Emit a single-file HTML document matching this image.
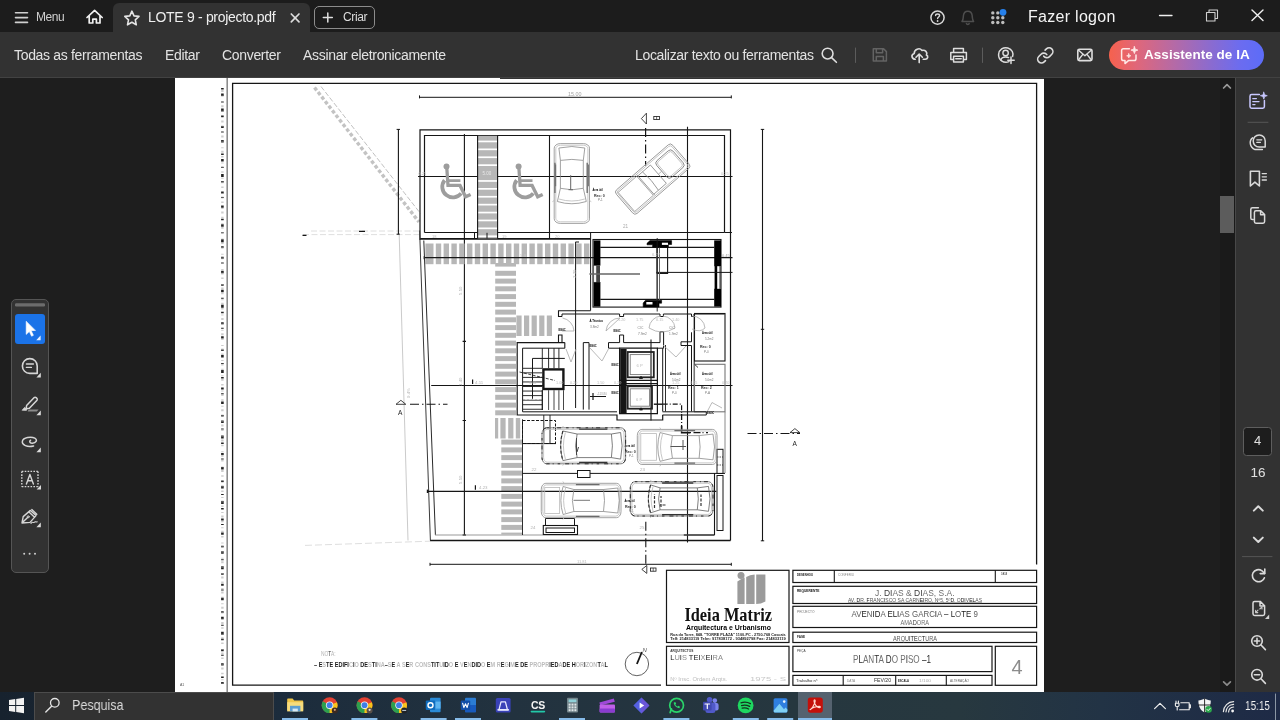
<!DOCTYPE html>
<html>
<head>
<meta charset="utf-8">
<title>LOTE 9 - projecto.pdf</title>
<style>
*{margin:0;padding:0;box-sizing:border-box}
html,body{width:1280px;height:720px;overflow:hidden;background:#1e1e1e;font-family:"Liberation Sans",sans-serif;color:#e6e6e6}
.abs{position:absolute}
#titlebar{position:absolute;left:0;top:0;width:1280px;height:32px;background:#1c1c1c}
#tab{position:absolute;left:113px;top:3px;width:197px;height:30px;background:#323232;border-radius:6px 6px 0 0}
#toolbar{position:absolute;left:0;top:32px;width:1280px;height:46px;background:#323232;border-bottom:1px solid #424242}
#tbx{position:absolute;left:500px;top:78px;width:544px;height:1px;background:#343434}
.t{position:absolute;white-space:nowrap;line-height:1;will-change:transform}
#page{position:absolute;left:175px;top:77px;width:869px;height:615px;background:#fff}
#rpane{position:absolute;left:1235px;top:78px;width:45px;height:614px;background:#323232;border-left:1px solid #484848}
#scroll{position:absolute;left:1220px;top:78px;width:16px;height:614px;background:#1a1a1a}
#thumb{position:absolute;left:1220px;top:196px;width:14px;height:37px;background:#5c5c5c}
#lpal{position:absolute;left:11px;top:299px;width:38px;height:274px;background:#323232;border:1px solid #555;border-radius:5px}
#taskbar{position:absolute;left:0;top:692px;width:1280px;height:28px;background:linear-gradient(90deg,#17222e 0%,#1c2c3c 22%,#22323f 40%,#26373f 62%,#27383f 75%,#223345 86%,#1e2a46 100%)}
#search{position:absolute;left:34px;top:692px;width:240px;height:28px;background:#323232;border:1px solid #4c4c4c;border-bottom:none}
svg{position:absolute;overflow:visible;will-change:transform}
</style>
</head>
<body>
<div id="page"></div>
<div id="titlebar"></div>
<div id="tab"></div>
<div id="toolbar"></div><div id="tbx"></div>

<svg style="left:0;top:0" width="1280" height="32" viewBox="0 0 1280 32" fill="none" stroke="#d4d4d4" stroke-width="1.5" stroke-linecap="round" stroke-linejoin="round">
 <!-- hamburger -->
 <path d="M15.5 12.8H27.5M15.5 17.6H27.5M15.5 22.4H27.5" stroke="#cfcfcf" stroke-width="1.6"/>
 <!-- home -->
 <path d="M87 17.5L94.6 10.3L102.2 17.5M89.2 16V23H92.8V19.2H96.4V23H100V16" stroke="#f0f0f0" stroke-width="1.7"/>
 <!-- star -->
 <path d="M131.9 11.2L134 15.9L139 16.4L135.3 19.8L136.3 24.8L131.9 22.3L127.5 24.8L128.5 19.8L124.8 16.4L129.8 15.9Z" stroke="#e4e4e4" stroke-width="1.6"/>
 <!-- tab close -->
 <path d="M291.3 14L299 21.8M299 14L291.3 21.8" stroke="#dcdcdc" stroke-width="1.7"/>
 <!-- criar button -->
 <rect x="314.5" y="6.5" width="60" height="22" rx="4.5" stroke="#8c8c8c" stroke-width="1"/>
 <path d="M323.3 17.6H332.3M327.8 13.1V22.1" stroke="#e0e0e0" stroke-width="1.5"/>
 <!-- help -->
 <circle cx="937.5" cy="17.6" r="6.6" stroke="#d8d8d8" stroke-width="1.5"/>
 <path d="M935.6 15.6C935.6 13.4 939.6 13.4 939.6 15.6C939.6 17 937.6 17 937.6 18.6" stroke="#d8d8d8" stroke-width="1.4"/>
 <circle cx="937.6" cy="21" r="0.9" fill="#d8d8d8" stroke="none"/>
 <!-- bell -->
 <path d="M962 21.5C963.4 20 963.2 18 963.4 15.8C963.7 12.6 965.6 11.2 967.8 11.2C970 11.2 971.9 12.6 972.2 15.8C972.4 18 972.2 20 973.6 21.5ZM966.4 23.6C966.8 24.8 968.8 24.8 969.2 23.6" stroke="#4e4e4e" stroke-width="1.5"/>
 <!-- apps grid -->
 <g fill="#bdbdbd" stroke="none">
  <circle cx="992.8" cy="12.9" r="1.7"/><circle cx="997.8" cy="12.9" r="1.7"/>
  <circle cx="992.8" cy="17.7" r="1.7"/><circle cx="997.8" cy="17.7" r="1.7"/><circle cx="1002.8" cy="17.7" r="1.7"/>
  <circle cx="992.8" cy="22.5" r="1.7"/><circle cx="997.8" cy="22.5" r="1.7"/><circle cx="1002.8" cy="22.5" r="1.7"/>
 </g>
 <circle cx="1003" cy="12.3" r="3.4" fill="#2680eb" stroke="none"/>
 <!-- window controls -->
 <path d="M1159.5 15.5H1172" stroke="#f0f0f0" stroke-width="1.3"/>
 <path d="M1206.5 12.5H1215V21H1206.5ZM1209 12.3V10H1217.5V18.5H1215.3" stroke="#d0d0d0" stroke-width="1.1"/>
 <path d="M1252 10L1263 20.5M1263 10L1252 20.5" stroke="#f0f0f0" stroke-width="1.4"/>
</svg>
<div class="t" id="tmenu" style="left:35.5px;top:11px;font-size:12px;color:#cfcfcf;letter-spacing:-0.45px">Menu</div>
<div class="t" id="ttab" style="left:147.5px;top:10px;font-size:14px;color:#efefef;letter-spacing:-0.31px">LOTE 9 - projecto.pdf</div>
<div class="t" id="tcriar" style="left:342.5px;top:11px;font-size:12px;color:#dcdcdc;letter-spacing:-0.35px">Criar</div>
<div class="t" id="tlogon" style="left:1028px;top:9px;font-size:16px;color:#f4f4f4;letter-spacing:0.29px">Fazer logon</div>


<div class="t" id="tb1" style="letter-spacing:-0.32px;left:14px;top:48px;font-size:14px;color:#e2e2e2">Todas as ferramentas</div>
<div class="t" id="tb2" style="letter-spacing:-0.32px;left:165px;top:48px;font-size:14px;color:#e2e2e2">Editar</div>
<div class="t" id="tb3" style="letter-spacing:-0.32px;left:222px;top:48px;font-size:14px;color:#e2e2e2">Converter</div>
<div class="t" id="tb4" style="letter-spacing:-0.32px;left:303px;top:48px;font-size:14px;color:#e2e2e2">Assinar eletronicamente</div>
<div class="t" id="tb5" style="letter-spacing:-0.32px;left:635px;top:48px;font-size:14px;color:#e2e2e2">Localizar texto ou ferramentas</div>
<div id="aibtn" style="position:absolute;left:1109px;top:40px;width:155px;height:30px;border-radius:15px;background:linear-gradient(90deg,#f6614d 0%,#e0677a 18%,#b56aa6 42%,#8a6bd0 66%,#6b6cf0 85%,#5c6cf8 100%)"></div>
<div class="t" id="tbai" style="left:1144.2px;top:48.2px;font-size:13.5px;letter-spacing:0.05px;font-weight:bold;color:#fff">Assistente de IA</div>
<svg style="left:0;top:32px" width="1280" height="45" viewBox="0 32 1280 45" fill="none" stroke="#dedede" stroke-width="1.6" stroke-linecap="round" stroke-linejoin="round">
 <!-- search -->
 <circle cx="827.6" cy="53.6" r="5.4"/><path d="M831.6 57.6L836.4 62.3"/>
 <path d="M855.5 48V62.5M982.5 48V62.5" stroke="#5c5c5c" stroke-width="1"/>
 <!-- save (dim) -->
 <path d="M873.3 48.8H883.6L886.4 51.6V61H873.3ZM876.3 48.8V52.8H882.6V48.8M876.3 61V56.4H883.4V61" stroke="#636363" stroke-width="1.5"/>
 <!-- cloud upload -->
 <path d="M915.3 59.2C911.6 59.2 910.6 54.6 914.2 53.4C914.2 49.4 919.4 47.2 922 50.4C925.2 49.6 927.8 52.2 926.4 55C928.6 56 928 59.2 925.2 59.2H923.2"/>
 <path d="M919.2 62.6V54.4M916 57.2L919.2 54L922.4 57.2"/>
 <!-- print -->
 <path d="M953.6 52.2V48.4H963.4V52.2M953.4 59.6H950.8V52.4H966.4V59.6H963.6M953.6 56.2H963.4V62H953.6ZM955.8 58.8H961.2" stroke-width="1.5"/>
 <!-- user plus -->
 <path d="M1009 61.6C1003.6 63.6 998.2 59.8 998.6 54.4C999 49.6 1003.4 46.8 1007.8 48C1012.2 49.2 1013.8 53.4 1012.6 56.4" stroke-width="1.5"/>
 <circle cx="1005.6" cy="53" r="2.7" stroke-width="1.4"/>
 <path d="M1000.8 60C1001.4 57.6 1003.4 57 1005.6 57C1007 57 1008 57.2 1008.6 57.6" stroke-width="1.4"/>
 <path d="M1011 57V63.4M1007.8 60.2H1014.2" stroke-width="1.5"/>
 <!-- link -->
 <g transform="translate(1036.1 46.2) scale(0.765)" stroke-width="2.1"><path d="M10 13a5 5 0 0 0 7.54.54l3-3a5 5 0 0 0-7.07-7.07l-1.72 1.71"/><path d="M14 11a5 5 0 0 0-7.54-.54l-3 3a5 5 0 0 0 7.07 7.07l1.71-1.71"/></g>
 <!-- mail -->
 <rect x="1077.8" y="49.2" width="14.2" height="11.4" rx="1.6" stroke-width="1.6"/><path d="M1078.6 50.2L1084.9 55.8L1091.2 50.2M1078.6 59.8L1082.8 54.4M1091.2 59.8L1087 54.4" stroke-width="1.4"/>
 <!-- AI icon -->
 <g stroke="#ffe9e6" stroke-width="1.5">
  <path d="M1129.4 48.8H1123.4C1122.2 48.8 1121.6 49.6 1121.6 50.6V58.8C1121.6 59.8 1122.2 60.6 1123.4 60.6H1125V63.6L1128.4 60.6H1134.2C1135.4 60.6 1136 59.8 1136 58.8V55"/>
  <path d="M1134.4 46.6L1135.3 49.2L1137.9 50.1L1135.3 51L1134.4 53.6L1133.5 51L1130.9 50.1L1133.5 49.2Z" fill="#ffe9e6" stroke-width="0.8"/>
  <path d="M1128.8 53.6L1129.4 55.2L1131 55.8L1129.4 56.4L1128.8 58L1128.2 56.4L1126.6 55.8L1128.2 55.2Z" fill="#ffe9e6" stroke-width="0.6"/>
 </g>
</svg>

<!--DRAWING--><svg style="left:0;top:0" width="1280" height="720" viewBox="0 0 1280 720" fill="none" font-family="Liberation Sans, sans-serif" shape-rendering="auto"><defs><clipPath id="pgclip"><rect x="175" y="77.5" width="869" height="614.5"/></clipPath></defs><g clip-path="url(#pgclip)">
<path d="M227.2 78L227.2 692" stroke="#8c8c8c" stroke-width="1.6" />
<path d="M222.4 88V684" stroke="#161616" stroke-width="2.6" fill="none" stroke-dasharray="1.5 4 2.5 5.5 1 6 3 4 1.5 9 2 3.6 1 7.4 2.4 11" opacity="0.95"/>
<path d="M222.4 90V684" stroke="#9a9a9a" stroke-width="2.4" fill="none" stroke-dasharray="2 3.2 1.5 5 1 2.5" opacity="0.5"/>
<text x="180" y="686" font-size="3.5" fill="#555" stroke="none" >A1</text>
<path d="M1036.6 564.5V83.4H232.6V685.2H661" stroke="#161616" stroke-width="1.3" fill="none" />
<path d="M419.5 97.3L731.3 97.3" stroke="#161616" stroke-width="1" />
<path d="M419.5 95.4V98.4M731.3 95.4V98.4" stroke="#161616" stroke-width="1" fill="none" />
<text x="568" y="96" font-size="5.4" fill="#a4a4a4" stroke="none" >15.00</text>
<path d="M314.5 87.5L419 222" stroke="#c3c3c3" stroke-width="3.4" fill="none" stroke-dasharray="3.6 2.2"/>
<path d="M321 86.5L420.5 213.5" stroke="#b0b0b0" stroke-width="0.8" fill="none" stroke-dasharray="5 2"/>
<path d="M303 234.6H420M311 231H420" stroke="#d6d6d6" stroke-width="0.8" fill="none" stroke-dasharray="6 2.5"/>
<path d="M302.5 235.4L306.5 235.4" stroke="#161616" stroke-width="1.2" />
<path d="M359 231.4L365 231.4" stroke="#161616" stroke-width="1.2" />
<path d="M398.4 129.2L398.4 234.4" stroke="#161616" stroke-width="1.1" />
<path d="M396.6 129.4H400M396.6 234.2H400" stroke="#161616" stroke-width="1" fill="none" />
<path d="M399.2 234.5L408 540.5" stroke="#bdbdbd" stroke-width="0.8" fill="none" />
<path d="M305 545.4L430 541.2" stroke="#d6d6d6" stroke-width="0.8" fill="none" stroke-dasharray="7 3"/>
<path d="M420 240V129.8H730.5V540.5" stroke="#161616" stroke-width="1.2" fill="none" />
<path d="M430 540.5L730.5 540.5" stroke="#161616" stroke-width="1.3" />
<path d="M424.5 232.5V135.5H724.5V232.5" stroke="#161616" stroke-width="1.2" fill="none" />
<path d="M424.5 232.5L724.5 232.5" stroke="#161616" stroke-width="1" />
<path d="M420 238.8L590.5 238.8" stroke="#161616" stroke-width="1.8" />
<path d="M724.5 232.5L732 232.5" stroke="#161616" stroke-width="1" />
<path d="M464.4 134L464.4 535" stroke="#161616" stroke-width="1.1" />
<path d="M549.5 135.5L549.5 238.5" stroke="#161616" stroke-width="1.1" />
<path d="M687.5 126.8L687.5 542.5" stroke="#161616" stroke-width="1.1" />
<path d="M418 176.5L732.5 176.5" stroke="#161616" stroke-width="1.1" />
<rect x="477.6" y="135.8" width="19.8" height="102.6" stroke="none" stroke-width="0" fill="#b7b7b7" />
<rect x="477.6" y="140.6" width="19.8" height="1.7" fill="#fff" stroke="none"/>
<rect x="477.6" y="148.5" width="19.8" height="1.7" fill="#fff" stroke="none"/>
<rect x="477.6" y="156.4" width="19.8" height="1.7" fill="#fff" stroke="none"/>
<rect x="477.6" y="164.3" width="19.8" height="1.7" fill="#fff" stroke="none"/>
<rect x="477.6" y="180.1" width="19.8" height="1.7" fill="#fff" stroke="none"/>
<rect x="477.6" y="188" width="19.8" height="1.7" fill="#fff" stroke="none"/>
<rect x="477.6" y="195.9" width="19.8" height="1.7" fill="#fff" stroke="none"/>
<rect x="477.6" y="203.8" width="19.8" height="1.7" fill="#fff" stroke="none"/>
<rect x="477.6" y="211.7" width="19.8" height="1.7" fill="#fff" stroke="none"/>
<rect x="477.6" y="219.6" width="19.8" height="1.7" fill="#fff" stroke="none"/>
<rect x="477.6" y="227.5" width="19.8" height="1.7" fill="#fff" stroke="none"/>
<rect x="477.6" y="235.4" width="19.8" height="1.7" fill="#fff" stroke="none"/>
<path d="M477.6 135.5L477.6 238.5" stroke="#161616" stroke-width="1.1" />
<path d="M497.6 135.5L497.6 238.5" stroke="#161616" stroke-width="1.1" />
<path d="M474.5 232.8V238.5M487 232.8V238.5" stroke="#161616" stroke-width="1" fill="none" />
<text x="482.5" y="175" font-size="4.5" fill="#e8e8e8" stroke="none" >5.00</text>
<g transform="translate(0 0)" stroke="#9d9d9d" fill="none" stroke-linecap="butt">
<circle cx="446.5" cy="166.6" r="3" fill="#9d9d9d" stroke="none"/>
<path d="M446.8 168L448 185.4H460L465.6 196.8L470.6 194.4" stroke-width="3.3"/>
<path d="M448 180.6H460.4" stroke-width="2.6"/>
<path d="M444.6 180.2A10.4 10.4 0 1 0 461.2 193.4" stroke-width="3.8"/>
</g>
<g transform="translate(72.1 0)" stroke="#9d9d9d" fill="none" stroke-linecap="butt">
<circle cx="446.5" cy="166.6" r="3" fill="#9d9d9d" stroke="none"/>
<path d="M446.8 168L448 185.4H460L465.6 196.8L470.6 194.4" stroke-width="3.3"/>
<path d="M448 180.6H460.4" stroke-width="2.6"/>
<path d="M444.6 180.2A10.4 10.4 0 1 0 461.2 193.4" stroke-width="3.8"/>
</g>
<text x="432" y="237.5" font-size="4" fill="#bbb" stroke="none" >18</text>
<text x="502" y="237.5" font-size="4" fill="#bbb" stroke="none" >19</text>
<text x="555" y="237.5" font-size="4" fill="#bbb" stroke="none" >20</text>
<text x="418.5" y="175" font-size="4" fill="#bbb" stroke="none" >0.25</text>
<text x="721" y="175" font-size="4" fill="#bbb" stroke="none" >0.25</text>
<text x="623" y="228" font-size="4.6" fill="#aaa" stroke="none" >21</text>
<rect x="425.4" y="243.5" width="8.1" height="20.7" fill="#b7b7b7" stroke="none"/>
<rect x="435.8" y="243.5" width="5.4" height="20.7" fill="#b7b7b7" stroke="none"/>
<rect x="443.6" y="243.5" width="5.4" height="20.7" fill="#b7b7b7" stroke="none"/>
<rect x="451.4" y="243.5" width="5.4" height="20.7" fill="#b7b7b7" stroke="none"/>
<rect x="459.2" y="243.5" width="5.4" height="20.7" fill="#b7b7b7" stroke="none"/>
<rect x="467" y="243.5" width="5.4" height="20.7" fill="#b7b7b7" stroke="none"/>
<rect x="474.8" y="243.5" width="5.4" height="20.7" fill="#b7b7b7" stroke="none"/>
<rect x="482.6" y="243.5" width="5.4" height="20.7" fill="#b7b7b7" stroke="none"/>
<rect x="490.4" y="243.5" width="5.4" height="20.7" fill="#b7b7b7" stroke="none"/>
<rect x="498.2" y="243.5" width="5.4" height="20.7" fill="#b7b7b7" stroke="none"/>
<rect x="506" y="243.5" width="5.4" height="20.7" fill="#b7b7b7" stroke="none"/>
<rect x="513.8" y="243.5" width="5.4" height="20.7" fill="#b7b7b7" stroke="none"/>
<rect x="521.6" y="243.5" width="5.4" height="20.7" fill="#b7b7b7" stroke="none"/>
<rect x="529.4" y="243.5" width="5.4" height="20.7" fill="#b7b7b7" stroke="none"/>
<rect x="537.2" y="243.5" width="5.4" height="20.7" fill="#b7b7b7" stroke="none"/>
<rect x="545" y="243.5" width="5.4" height="20.7" fill="#b7b7b7" stroke="none"/>
<rect x="552.8" y="243.5" width="5.4" height="20.7" fill="#b7b7b7" stroke="none"/>
<rect x="560.6" y="243.5" width="5.4" height="20.7" fill="#b7b7b7" stroke="none"/>
<rect x="568.4" y="243.5" width="5.4" height="20.7" fill="#b7b7b7" stroke="none"/>
<rect x="576.2" y="243.5" width="5.4" height="20.7" fill="#b7b7b7" stroke="none"/>
<rect x="584" y="243.5" width="5.4" height="20.7" fill="#b7b7b7" stroke="none"/>
<path d="M424 257.6L732.5 257.6" stroke="#161616" stroke-width="1.1" />
<path d="M424.2 256.2V259.2" stroke="#161616" stroke-width="1.2" fill="none" />
<rect x="495.2" y="263" width="20.8" height="3.6" fill="#b7b7b7" stroke="none"/>
<rect x="495.2" y="270.8" width="20.8" height="5" fill="#b7b7b7" stroke="none"/>
<rect x="495.2" y="278.6" width="20.8" height="5" fill="#b7b7b7" stroke="none"/>
<rect x="495.2" y="286.3" width="20.8" height="5" fill="#b7b7b7" stroke="none"/>
<rect x="495.2" y="294.1" width="20.8" height="5" fill="#b7b7b7" stroke="none"/>
<rect x="495.2" y="301.8" width="20.8" height="5" fill="#b7b7b7" stroke="none"/>
<rect x="495.2" y="309.6" width="20.8" height="5" fill="#b7b7b7" stroke="none"/>
<rect x="495.2" y="317.3" width="20.8" height="5" fill="#b7b7b7" stroke="none"/>
<rect x="495.2" y="325.1" width="20.8" height="5" fill="#b7b7b7" stroke="none"/>
<rect x="495.2" y="332.8" width="20.8" height="5" fill="#b7b7b7" stroke="none"/>
<rect x="495.2" y="340.6" width="20.8" height="5" fill="#b7b7b7" stroke="none"/>
<rect x="495.2" y="348.3" width="20.8" height="5" fill="#b7b7b7" stroke="none"/>
<rect x="495.2" y="356.1" width="20.8" height="5" fill="#b7b7b7" stroke="none"/>
<rect x="495.2" y="363.8" width="20.8" height="5" fill="#b7b7b7" stroke="none"/>
<rect x="495.2" y="371.6" width="20.8" height="5" fill="#b7b7b7" stroke="none"/>
<rect x="495.2" y="379.3" width="20.8" height="5" fill="#b7b7b7" stroke="none"/>
<rect x="495.2" y="387.1" width="20.8" height="5" fill="#b7b7b7" stroke="none"/>
<rect x="495.2" y="394.8" width="20.8" height="5" fill="#b7b7b7" stroke="none"/>
<rect x="495.2" y="402.6" width="20.8" height="5" fill="#b7b7b7" stroke="none"/>
<rect x="495.2" y="410.3" width="20.8" height="5" fill="#b7b7b7" stroke="none"/>
<rect x="516.4" y="315.5" width="5.2" height="20.5" fill="#b7b7b7" stroke="none"/>
<rect x="524" y="315.5" width="5.2" height="20.5" fill="#b7b7b7" stroke="none"/>
<rect x="531.6" y="315.5" width="5.2" height="20.5" fill="#b7b7b7" stroke="none"/>
<rect x="539.2" y="315.5" width="5.2" height="20.5" fill="#b7b7b7" stroke="none"/>
<rect x="546.8" y="315.5" width="5.2" height="20.5" fill="#b7b7b7" stroke="none"/>
<rect x="495" y="418" width="3.2" height="20.5" fill="#b7b7b7" stroke="none"/>
<rect x="500.4" y="418" width="5.2" height="20.5" fill="#b7b7b7" stroke="none"/>
<rect x="508.2" y="418" width="5.2" height="20.5" fill="#b7b7b7" stroke="none"/>
<rect x="515.8" y="418" width="4.4" height="20.5" fill="#b7b7b7" stroke="none"/>
<rect x="501.3" y="439.6" width="20.8" height="5" fill="#b7b7b7" stroke="none"/>
<rect x="501.3" y="447.4" width="20.8" height="5" fill="#b7b7b7" stroke="none"/>
<rect x="501.3" y="455.1" width="20.8" height="5" fill="#b7b7b7" stroke="none"/>
<rect x="501.3" y="462.9" width="20.8" height="5" fill="#b7b7b7" stroke="none"/>
<rect x="501.3" y="470.6" width="20.8" height="5" fill="#b7b7b7" stroke="none"/>
<rect x="501.3" y="478.4" width="20.8" height="5" fill="#b7b7b7" stroke="none"/>
<rect x="501.3" y="486.1" width="20.8" height="5" fill="#b7b7b7" stroke="none"/>
<rect x="501.3" y="493.9" width="20.8" height="5" fill="#b7b7b7" stroke="none"/>
<rect x="501.3" y="501.6" width="20.8" height="5" fill="#b7b7b7" stroke="none"/>
<rect x="501.3" y="509.4" width="20.8" height="5" fill="#b7b7b7" stroke="none"/>
<rect x="501.3" y="517.1" width="20.8" height="5" fill="#b7b7b7" stroke="none"/>
<rect x="501.3" y="524.9" width="20.8" height="5" fill="#b7b7b7" stroke="none"/>
<rect x="501.3" y="532.6" width="20.8" height="1.8" fill="#b7b7b7" stroke="none"/>
<path d="M419.6 230.5L430.4 540.5" stroke="#3a3a3a" stroke-width="1" fill="none" />
<path d="M423.8 240.5L435.4 535" stroke="#2a2a2a" stroke-width="1" fill="none" />
<path d="M431.2 385.5L732.5 385.5" stroke="#161616" stroke-width="1.1" />
<path d="M427.5 491.4L716.3 491.4" stroke="#161616" stroke-width="1.1" />
<path d="M427.6 489.6V493" stroke="#161616" stroke-width="1.6" fill="none" />
<path d="M435 535L714.5 535" stroke="#9a9a9a" stroke-width="1.2" />
<path d="M683.8 535L714.5 535" stroke="#161616" stroke-width="1.2" />
<path d="M714.5 473L714.5 535" stroke="#161616" stroke-width="1.1" />
<path d="M462.6 341.3H466M462.6 420.5H466M462.6 535H466" stroke="#161616" stroke-width="1.2" fill="none" />
<path d="M575.6 241.8L575.6 408" stroke="#161616" stroke-width="1" />
<path d="M575.8 242H579" stroke="#161616" stroke-width="1" fill="none" />
<path d="M762.5 129.2L762.5 541" stroke="#161616" stroke-width="1.1" />
<path d="M760.8 129.4H764.2M760.8 540.8H764.2M760.8 329.3H764.2" stroke="#161616" stroke-width="1" fill="none" />
<path d="M430 564.3L731.3 564.3" stroke="#161616" stroke-width="1" />
<path d="M430 562.8V565.8M731.3 562.8V565.8" stroke="#161616" stroke-width="1" fill="none" />
<text x="577" y="562.6" font-size="4" fill="#bbb" stroke="none" >11.81</text>
<text x="462" y="295" font-size="4.4" fill="#b4b4b4" stroke="none" transform="rotate(-90 462 295)">5.50</text>
<text x="462" y="386" font-size="4.4" fill="#b4b4b4" stroke="none" transform="rotate(-90 462 386)">1.40</text>
<text x="462" y="484" font-size="4.4" fill="#b4b4b4" stroke="none" transform="rotate(-90 462 484)">5.50</text>
<text x="576" y="278" font-size="4.4" fill="#b4b4b4" stroke="none" transform="rotate(-90 576 278)">3.30</text>
<text x="409.5" y="398" font-size="4.4" fill="#b4b4b4" stroke="none" transform="rotate(-90 409.5 398)">9.4%</text>
<text x="475" y="383.5" font-size="4.4" fill="#b4b4b4" stroke="none" >4.11</text>
<text x="479" y="489.4" font-size="4.4" fill="#b4b4b4" stroke="none" >4.23</text>
<path d="M472.6 379.5L472.6 384" stroke="#161616" stroke-width="1.2" />
<path d="M475.4 485.3L475.4 489.8" stroke="#161616" stroke-width="1.2" />
<text x="520" y="256.5" font-size="4.4" fill="#ccc" stroke="none" >5.0</text>
<path d="M396 404.3L400.9 400.3L405.8 404.3Z" stroke="#161616" stroke-width="0.8" fill="none" />
<text x="398" y="414.5" font-size="8" fill="#222" stroke="none" textLength="4.4" lengthAdjust="spacingAndGlyphs">A</text>
<path d="M410 404.3H447.5" stroke="#161616" stroke-width="1.1" fill="none" stroke-dasharray="9 3 1.5 3"/>
<path d="M747.5 433.5H800" stroke="#161616" stroke-width="1.1" fill="none" stroke-dasharray="9 3 1.5 3"/>
<path d="M790 432.6L794.9 428.6L799.8 432.6Z" stroke="#161616" stroke-width="0.8" fill="none" />
<text x="792.4" y="446.4" font-size="8" fill="#222" stroke="none" textLength="4.4" lengthAdjust="spacingAndGlyphs">A</text>
<path d="M646.4 113.2V124L641.4 118.6Z" stroke="#161616" stroke-width="0.8" fill="none" />
<path d="M645.6 128V165.5" stroke="#161616" stroke-width="1.2" fill="none" stroke-dasharray="9 3 1.5 3"/>
<rect x="653.8" y="116.4" width="5.6" height="3.2" stroke="#161616" stroke-width="0.8" fill="none" />
<path d="M656.6 116.4L656.6 119.6" stroke="#161616" stroke-width="0.6" />
<path d="M645.8 521.8V565.5" stroke="#161616" stroke-width="1.1" fill="none" stroke-dasharray="9 3 1.5 3"/>
<path d="M646.8 565.5V573.4L641.8 569.4Z" stroke="#161616" stroke-width="0.8" fill="none" />
<rect x="650.4" y="568" width="5.6" height="3.2" stroke="#161616" stroke-width="0.8" fill="none" />
<path d="M653.2 568L653.2 571.2" stroke="#161616" stroke-width="0.6" />
<rect x="593" y="239.5" width="128" height="67.6" stroke="#161616" stroke-width="1.1" fill="none" />
<path d="M600.3 247.4H714.2M600.3 299.3H714.2" stroke="#161616" stroke-width="1.2" fill="none" />
<path d="M590.6 232.5L590.6 310.6" stroke="#161616" stroke-width="1" />
<rect x="593.6" y="240.4" width="6.8" height="25.2" stroke="none" stroke-width="0" fill="#000" />
<rect x="593.6" y="282" width="6.8" height="24.6" stroke="none" stroke-width="0" fill="#000" />
<rect x="596.4" y="265.4" width="3.6" height="17" stroke="none" stroke-width="0" fill="#444" />
<rect x="593.8" y="265.6" width="2.4" height="16.6" stroke="#222" stroke-width="0.5" fill="#fff" />
<rect x="714.2" y="240.4" width="6.8" height="25.8" stroke="none" stroke-width="0" fill="#000" />
<rect x="714.2" y="288.8" width="6.8" height="17.8" stroke="none" stroke-width="0" fill="#000" />
<rect x="714.6" y="266" width="2.6" height="23" stroke="none" stroke-width="0" fill="#000" />
<rect x="719.4" y="266" width="1.6" height="23" stroke="none" stroke-width="0" fill="#555" />
<path d="M589.4 274L640 274" stroke="#666" stroke-width="1.7" />
<path d="M656 272.4L732.5 272.4" stroke="#161616" stroke-width="1" />
<path d="M657 247.4V273.4H667.6V247.4" stroke="#161616" stroke-width="1.1" fill="none" />
<path d="M657 247.4V300M659.5 247.4V300" stroke="#666" stroke-width="1" fill="none" />
<path d="M647 243.3L650 240.6H671.6V244.5H668.4V247.2H652.6V244.8H647Z" stroke="#000" stroke-width="0.6" fill="#000" />
<rect x="661.9" y="242.7" width="6.1" height="2.2" stroke="#fff" stroke-width="0" fill="#fff" />
<path d="M643.2 303L645.6 300.2H661.6V303.2H659V307H643.2Z" stroke="#000" stroke-width="0.6" fill="#000" />
<rect x="646.3" y="302" width="6.2" height="2.5" stroke="#fff" stroke-width="0" fill="#fff" />
<path d="M657.2 238L657.2 311.5" stroke="#161616" stroke-width="0.9" />
<text x="652" y="256" font-size="4.2" fill="#bbb" stroke="none" >6.27</text>
<text x="722" y="257" font-size="4" fill="#999" stroke="none" >0.45</text>
<path d="M562 316.5H558.5V310.8H590.6" stroke="#161616" stroke-width="1.1" fill="none" />
<path d="M562 316.5V314H619.6V316.5H623.6V314H660V316.5H663.4V314H691.5V316.5H694.2V314H724.7" stroke="#161616" stroke-width="1" fill="none" />
<path d="M558.5 342.6V335H562V342.6" stroke="#161616" stroke-width="1.1" fill="none" />
<path d="M564.8 342.6H517.2V415H617V420H662.7V415" stroke="#161616" stroke-width="1.2" fill="none" />
<path d="M564.8 348.2H522.6V411.8H617" stroke="#161616" stroke-width="1" fill="none" />
<path d="M564.8 342.6V348.2" stroke="#161616" stroke-width="1.1" fill="none" />
<rect x="543.4" y="369.4" width="20" height="19.6" stroke="#161616" stroke-width="2.4" fill="#fff" />
<path d="M542.3 348.2L542.3 368.2" stroke="#161616" stroke-width="0.9" />
<path d="M542.3 390.2L542.3 410" stroke="#161616" stroke-width="0.8" />
<path d="M548.6 348.2L548.6 368.2" stroke="#161616" stroke-width="0.9" />
<path d="M548.6 390.2L548.6 410" stroke="#161616" stroke-width="0.8" />
<path d="M554 348.2L554 368.2" stroke="#161616" stroke-width="0.9" />
<path d="M554 390.2L554 410" stroke="#161616" stroke-width="0.8" />
<path d="M558.9 348.2L558.9 368.2" stroke="#161616" stroke-width="0.9" />
<path d="M558.9 390.2L558.9 410" stroke="#161616" stroke-width="0.8" />
<path d="M563.5 390.2L563.5 410" stroke="#161616" stroke-width="0.8" />
<path d="M523 368.3L542.3 368.3" stroke="#161616" stroke-width="0.9" />
<path d="M523 372.85L542.3 372.85" stroke="#161616" stroke-width="0.9" />
<path d="M523 377.40000000000003L542.3 377.40000000000003" stroke="#161616" stroke-width="0.9" />
<path d="M523 381.95000000000005L542.3 381.95000000000005" stroke="#161616" stroke-width="0.9" />
<path d="M523 386.50000000000006L542.3 386.50000000000006" stroke="#161616" stroke-width="0.9" />
<path d="M523 391.05000000000007L542.3 391.05000000000007" stroke="#161616" stroke-width="0.9" />
<path d="M523 395.6000000000001L542.3 395.6000000000001" stroke="#161616" stroke-width="0.9" />
<path d="M523 400.1500000000001L542.3 400.1500000000001" stroke="#161616" stroke-width="0.9" />
<path d="M523 404.7000000000001L542.3 404.7000000000001" stroke="#161616" stroke-width="0.9" />
<path d="M523 409.2500000000001L542.3 409.2500000000001" stroke="#161616" stroke-width="0.9" />
<path d="M564.8 358.4H532.5V398.8" stroke="#161616" stroke-width="1" fill="none" />
<path d="M542.3 390V410" stroke="#161616" stroke-width="1" fill="none" />
<path d="M519.5 372L555 380.5" stroke="#161616" stroke-width="0.8" fill="none" stroke-dasharray="3 1.5"/>
<path d="M525 399H541" stroke="#fff" stroke-width="0.8" fill="none" stroke-dasharray="2 2"/>
<path d="M583.3 409.6V342.6H589V409.6" stroke="#161616" stroke-width="1" fill="none" />
<path d="M608.5 342.6H619.6V335H623.6V342.6H660V331.8H663.6V348.2H657.4M608.5 342.6V348.2H619.6" stroke="#161616" stroke-width="1" fill="none" />
<path d="M651 339.5L651 420.4" stroke="#161616" stroke-width="1.1" />
<path d="M619.6 348.2V413.6H657.4V348.2Z" stroke="#161616" stroke-width="1.2" fill="none" />
<rect x="620.2" y="349" width="6.4" height="64" stroke="none" stroke-width="0" fill="#161616" />
<rect x="627.7" y="352" width="26.1" height="25.3" stroke="#222" stroke-width="1.8" fill="none" />
<rect x="630.2" y="354.6" width="21" height="20" stroke="#777" stroke-width="0.9" fill="none" />
<rect x="627.7" y="386.3" width="24.3" height="22.4" stroke="#222" stroke-width="1.8" fill="none" />
<rect x="630.2" y="388.8" width="19.4" height="17.4" stroke="#777" stroke-width="0.9" fill="none" />
<path d="M619.6 380.4H657.4M619.6 383.6H657.4" stroke="#161616" stroke-width="1.3" fill="none" />
<path d="M639.5 378.5L641 376.3L642.5 378.5ZM639.5 410L641 407.8L642.5 410Z" stroke="#161616" stroke-width="0.8" fill="#161616" />
<text x="636.5" y="367" font-size="4.2" fill="#bbb" stroke="none" >6 P</text>
<text x="636" y="400.5" font-size="4.2" fill="#bbb" stroke="none" >6 P</text>
<path d="M691.5 332.3V341.8H681V345.5H691.5V411.4M694.2 314V411.4" stroke="#161616" stroke-width="1" fill="none" />
<path d="M662.7 348.2V411.4" stroke="#161616" stroke-width="1" fill="none" />
<path d="M665.5 345V411.4" stroke="#161616" stroke-width="0.9" fill="none" />
<rect x="694.5" y="313.5" width="30.5" height="47.5" stroke="#161616" stroke-width="1.1" fill="none" />
<rect x="694.5" y="364.3" width="30.5" height="47.5" stroke="#777" stroke-width="1.1" fill="none" />
<path d="M694.5 364.3L698 367.5" stroke="#161616" stroke-width="0.8" fill="none" />
<path d="M562.5 318A14 14 0 0 1 574 331M562 331L574 331" stroke="#a8a8a8" stroke-width="0.8" fill="none" />
<path d="M606 331A14 14 0 0 1 620 318M606 331L620 318" stroke="#a8a8a8" stroke-width="0.8" fill="none" />
<path d="M649 328A13 13 0 0 1 661 316M663 316A13 13 0 0 1 675 328M649 328Q662 336 675 328" stroke="#a8a8a8" stroke-width="0.8" fill="none" />
<path d="M692 316A13 13 0 0 1 705 328M692 329Q700 333 705 328" stroke="#a8a8a8" stroke-width="0.8" fill="none" />
<path d="M566 349L571 362L576 349" stroke="#a8a8a8" stroke-width="0.8" fill="none" />
<path d="M590 348L602 361L609 348" stroke="#a8a8a8" stroke-width="0.8" fill="none" />
<path d="M663 345L676 357L686 346" stroke="#a8a8a8" stroke-width="0.8" fill="none" />
<path d="M707 412L712 402.5L722 408" stroke="#a8a8a8" stroke-width="0.8" fill="none" />
<text x="558.5" y="331.4" font-size="2.6" fill="#000" stroke="none" font-weight="bold">EI60C</text>
<text x="613.5" y="331.6" font-size="2.6" fill="#000" stroke="none" font-weight="bold">EI60C</text>
<text x="589.5" y="346.6" font-size="2.6" fill="#000" stroke="none" font-weight="bold">EI60C</text>
<text x="611.5" y="366" font-size="2.6" fill="#000" stroke="none" font-weight="bold">EI60C</text>
<text x="611.5" y="394" font-size="2.6" fill="#000" stroke="none" font-weight="bold">EI60C</text>
<text x="707" y="413.5" font-size="2.6" fill="#000" stroke="none" font-weight="bold">EI60C</text>
<text x="589.5" y="322" font-size="2.8" fill="#000" stroke="none" font-weight="bold">Á.Técnica</text>
<text x="590" y="328" font-size="3.2" fill="#777" stroke="none" >3.8m2</text>
<text x="637.5" y="329" font-size="3.4" fill="#888" stroke="none" >CIC</text>
<text x="638" y="335" font-size="3.2" fill="#777" stroke="none" >7.9m2</text>
<text x="669" y="329" font-size="3.4" fill="#888" stroke="none" >CIC</text>
<text x="669" y="335" font-size="3.2" fill="#777" stroke="none" >1.9m2</text>
<text x="702" y="334" font-size="2.6" fill="#000" stroke="none" font-weight="bold">Área útil</text>
<text x="705" y="340" font-size="3" fill="#777" stroke="none" >5.2m2</text>
<text x="700" y="348" font-size="3.6" fill="#333" stroke="none" font-weight="bold">Rec: 0</text>
<text x="704" y="353" font-size="3" fill="#777" stroke="none" >P-0</text>
<text x="670" y="375" font-size="2.6" fill="#000" stroke="none" font-weight="bold">Área útil</text>
<text x="672" y="381" font-size="3" fill="#777" stroke="none" >5.0m2</text>
<text x="668" y="388.5" font-size="3.6" fill="#333" stroke="none" font-weight="bold">Rec: 1</text>
<text x="672" y="394" font-size="3" fill="#777" stroke="none" >P-0</text>
<text x="702" y="375" font-size="2.6" fill="#000" stroke="none" font-weight="bold">Área útil</text>
<text x="705" y="381" font-size="3" fill="#777" stroke="none" >5.0m2</text>
<text x="701" y="388.5" font-size="3.6" fill="#333" stroke="none" font-weight="bold">Rec: 2</text>
<text x="705" y="394" font-size="3" fill="#777" stroke="none" >P-A</text>
<text x="592.5" y="191" font-size="2.6" fill="#000" stroke="none" font-weight="bold">Área útil</text>
<text x="594" y="196.5" font-size="3.6" fill="#333" stroke="none" font-weight="bold">Rec: 0</text>
<text x="598" y="201" font-size="3" fill="#777" stroke="none" >P-1</text>
<text x="624.5" y="447" font-size="2.6" fill="#000" stroke="none" font-weight="bold">Área útil</text>
<text x="625" y="452.5" font-size="3.6" fill="#333" stroke="none" font-weight="bold">Rec: 0</text>
<text x="629" y="457" font-size="3" fill="#777" stroke="none" >P-1</text>
<text x="624.5" y="502" font-size="2.6" fill="#000" stroke="none" font-weight="bold">Área útil</text>
<text x="625" y="507.5" font-size="3.6" fill="#333" stroke="none" font-weight="bold">Rec: 0</text>
<text x="629" y="512" font-size="3" fill="#777" stroke="none" >P-1</text>
<text x="618" y="320.5" font-size="3.8" fill="#bcbcbc" stroke="none" >1.20</text>
<text x="636" y="320.5" font-size="3.8" fill="#bcbcbc" stroke="none" >1.75</text>
<text x="656" y="320.5" font-size="3.8" fill="#bcbcbc" stroke="none" >0.15</text>
<text x="672" y="320.5" font-size="3.8" fill="#bcbcbc" stroke="none" >1.40</text>
<text x="529" y="383.5" font-size="3.8" fill="#bcbcbc" stroke="none" >1.00</text>
<text x="556" y="383.5" font-size="3.8" fill="#bcbcbc" stroke="none" >1.00</text>
<text x="570" y="383.5" font-size="3.8" fill="#bcbcbc" stroke="none" >0.20</text>
<text x="597" y="383.5" font-size="3.8" fill="#bcbcbc" stroke="none" >1.50</text>
<text x="614" y="383.5" font-size="3.8" fill="#bcbcbc" stroke="none" >0.20</text>
<text x="672" y="383.5" font-size="3.8" fill="#bcbcbc" stroke="none" >1.25</text>
<text x="690" y="383.5" font-size="3.8" fill="#bcbcbc" stroke="none" >0.15</text>
<text x="722" y="383.5" font-size="3.8" fill="#bcbcbc" stroke="none" >0.20</text>
<path d="M590 396.5H606M593 393V400" stroke="#161616" stroke-width="1.2" fill="none" />
<text x="597" y="394.5" font-size="3" fill="#999" stroke="none" >-113.80</text>
<path d="M662.5 411.8H706.3M662.5 415H706.3V411.8" stroke="#161616" stroke-width="1" fill="none" />
<path d="M725 411.8L725 473" stroke="#8a8a8a" stroke-width="1" />
<path d="M653.8 404.2H662.7" stroke="#161616" stroke-width="1.4" fill="none" />
<path d="M662.7 404.2H681.6V413" stroke="#161616" stroke-width="1.2" fill="none" stroke-dasharray="5 2 1 2"/>
<path d="M681.6 414V432.7" stroke="#161616" stroke-width="1.3" fill="none" stroke-dasharray="6 2 1 2"/>
<path d="M681.6 426V432.7H690" stroke="#161616" stroke-width="1.5" fill="none" />
<path d="M690 432.7H708" stroke="#161616" stroke-width="1.3" fill="none" stroke-dasharray="1 2.5 7 2"/>
<rect x="522.5" y="420.5" width="33" height="23" stroke="#161616" stroke-width="1" fill="none" stroke-dasharray="3 1.5"/>
<path d="M543.8 415V443.5M550 415V443.5" stroke="#161616" stroke-width="0.9" fill="none" />
<path d="M522.5 419.3V535" stroke="#161616" stroke-width="0.9" fill="none" />
<path d="M522.5 443.6L556 443.6" stroke="#161616" stroke-width="1" />
<path d="M522.5 473.4L725 473.4" stroke="#161616" stroke-width="1" />
<rect x="577.5" y="470.5" width="12.5" height="7" stroke="#161616" stroke-width="1" fill="#fff" />
<rect x="717" y="449.3" width="6" height="24.2" stroke="#161616" stroke-width="1" fill="none" />
<path d="M717 457H723M717 465H723" stroke="#161616" stroke-width="0.7" fill="none" stroke-dasharray="1.5 1"/>
<rect x="717" y="475.5" width="6" height="55" stroke="#161616" stroke-width="1" fill="none" />
<path d="M545.5 525.5V518.5H574.5V525.5" stroke="#161616" stroke-width="1" fill="none" />
<rect x="543.3" y="525.5" width="34.2" height="9" stroke="#161616" stroke-width="1.1" fill="none" />
<rect x="546" y="528" width="28.5" height="4.5" stroke="#161616" stroke-width="1" fill="none" />
<text x="531.5" y="471" font-size="4.4" fill="#b0b0b0" stroke="none" >22</text>
<text x="640" y="471" font-size="4.4" fill="#b0b0b0" stroke="none" >23</text>
<text x="530.5" y="528.8" font-size="4.4" fill="#b0b0b0" stroke="none" >24</text>
<text x="639.5" y="528.8" font-size="4.4" fill="#b0b0b0" stroke="none" >25</text>
<g transform="rotate(-90 571.9 183.5)" stroke="#8a8a8a" fill="none" stroke-width="0.8">
<rect x="532" y="165.8" width="79.8" height="35.3" rx="4.6" ry="6.1"/>
<rect x="533.6" y="167.4" width="76.6" height="32.099999999999994" rx="3.5999999999999996" ry="4.6" stroke="#b9b9b9"/>
<path d="M553.9 169Q549.4 183.45000000000002 553.9 197.90000000000003M567.1 172Q564.1 183.45000000000002 567.1 194.90000000000003M553.9 169L567.1 172M553.9 197.90000000000003L567.1 194.90000000000003"/>
<path d="M556.4 170.5Q552.4 183.45000000000002 556.4 196.40000000000003" stroke="#b9b9b9"/>
<path d="M567.1 172H595M567.1 194.90000000000003H595"/>
<path d="M595 172Q597 183.45000000000002 595 194.90000000000003M607.4 170.5Q610.4 183.45000000000002 607.4 196.40000000000003M595 172L607.4 170.5M595 194.90000000000003L607.4 196.40000000000003"/>
<path d="M569.1 167.10000000000002H591M569.1 199.8H591" stroke="#6a6a6a" stroke-width="1.3"/>
<path d="M554.9 165.8l-1.2 -1.8M554.9 201.10000000000002l-1.2 1.8" stroke="#b9b9b9"/>
</g>
<path d="M554.9 162.7V193M587.2 162.7V193" stroke="#777" stroke-width="1.5" fill="none" />
<path d="M570.7 175.2V189.7M568.5 189.7H573" stroke="#666" stroke-width="1" fill="none" />
<g transform="rotate(-41 652.7 179.1)" stroke="#8a8a8a" fill="none" stroke-width="0.8">
<rect x="615.35" y="163.45" width="74.7" height="31.3" rx="3" ry="3.5"/>
<rect x="616.85" y="164.95" width="71.7" height="28.3" rx="2.5" stroke="#bbb"/>
<rect x="617.85" y="166.45" width="24.7" height="25.3" stroke="#999"/>
<path d="M643.7 165.45V192.75M649.7 166.95Q651.7 179.1 649.7 191.25M660.2 166.95V191.25M643.7 166.95H660.2M643.7 191.25H660.2"/>
<rect x="664.7" y="167.95" width="21.7" height="22.3" rx="3.5" stroke="#777"/>
<rect x="666.2" y="169.45" width="18.7" height="19.3" rx="2.5" stroke="#bbb"/>
<path d="M660.2 179.1H664.7" stroke="#aaa"/>
</g>
<g  stroke="#5e5e5e" fill="none" stroke-width="0.8">
<rect x="542" y="427.8" width="83.6" height="36" rx="4.6" ry="6.1"/>
<rect x="543.6" y="429.40000000000003" width="80.39999999999999" height="32.8" rx="3.5999999999999996" ry="4.6" stroke="#b9b9b9"/>
<path d="M562.9 431Q558.4 445.8 562.9 460.6M577.1 434Q574.1 445.8 577.1 457.6M562.9 431L577.1 434M562.9 460.6L577.1 457.6"/>
<path d="M565.4 432.5Q561.4 445.8 565.4 459.1" stroke="#b9b9b9"/>
<path d="M577.1 434H611.4M577.1 457.6H611.4"/>
<path d="M611.4 434Q613.4 445.8 611.4 457.6M620.6 432.5Q623.6 445.8 620.6 459.1M611.4 434L620.6 432.5M611.4 457.6L620.6 459.1"/>
<path d="M579.1 429.1H607.4M579.1 462.5H607.4" stroke="#333" stroke-width="1.3"/>
<rect x="542" y="427.8" width="83.6" height="36" rx="4.6" ry="6.1" stroke="#2a2a2a" stroke-width="1" stroke-dasharray="2.5 4 1 3 4 5"/>
<path d="M562.9 431Q558.4 445.8 562.9 460.6" stroke="#333" stroke-width="1.1" stroke-dasharray="3 2"/>
<path d="M563.9 427.8l-1.2 -1.8M563.9 463.8l-1.2 1.8" stroke="#b9b9b9"/>
</g>
<g  stroke="#8a8a8a" fill="none" stroke-width="0.8">
<rect x="637.3" y="429.4" width="79.7" height="35.1" rx="4.6" ry="6.1"/>
<rect x="638.9" y="431" width="76.5" height="31.900000000000002" rx="3.5999999999999996" ry="4.6" stroke="#b9b9b9"/>
<path d="M660 432.59999999999997Q655.5 446.95 660 461.3M672.4 435.59999999999997Q669.4 446.95 672.4 458.3M660 432.59999999999997L672.4 435.59999999999997M660 461.3L672.4 458.3"/>
<path d="M662.5 434.09999999999997Q658.5 446.95 662.5 459.8" stroke="#b9b9b9"/>
<path d="M672.4 435.59999999999997H699.1M672.4 458.3H699.1"/>
<path d="M699.1 435.59999999999997Q701.1 446.95 699.1 458.3M713 434.09999999999997Q716 446.95 713 459.8M699.1 435.59999999999997L713 434.09999999999997M699.1 458.3L713 459.8"/>
<path d="M674.4 430.7H695.1M674.4 463.2H695.1" stroke="#6a6a6a" stroke-width="1.3"/>
<rect x="640.8" y="433.59999999999997" width="15.7" height="26.700000000000003" stroke="#b9b9b9"/>
<path d="M661 429.4l-1.2 -1.8M661 464.5l-1.2 1.8" stroke="#b9b9b9"/>
</g>
<g  stroke="#8a8a8a" fill="none" stroke-width="0.8">
<rect x="541.25" y="483.3" width="79.75" height="34.4" rx="4.6" ry="6.1"/>
<rect x="542.85" y="484.90000000000003" width="76.55" height="31.2" rx="3.5999999999999996" ry="4.6" stroke="#b9b9b9"/>
<path d="M563.1 486.5Q558.6 500.5 563.1 514.5M573.9 489.5Q570.9 500.5 573.9 511.5M563.1 486.5L573.9 489.5M563.1 514.5L573.9 511.5"/>
<path d="M565.6 488Q561.6 500.5 565.6 513" stroke="#b9b9b9"/>
<path d="M573.9 489.5H603.5M573.9 511.5H603.5"/>
<path d="M603.5 489.5Q605.5 500.5 603.5 511.5M617.8 488Q620.8 500.5 617.8 513M603.5 489.5L617.8 488M603.5 511.5L617.8 513"/>
<path d="M575.9 484.6H599.5M575.9 516.4000000000001H599.5" stroke="#6a6a6a" stroke-width="1.3"/>
<rect x="544.75" y="487.5" width="14.9" height="26" stroke="#b9b9b9"/>
<path d="M564.1 483.3l-1.2 -1.8M564.1 517.7l-1.2 1.8" stroke="#b9b9b9"/>
</g>
<g  stroke="#5e5e5e" fill="none" stroke-width="0.8">
<rect x="630.3" y="481.7" width="82.7" height="34.3" rx="4.6" ry="6.1"/>
<rect x="631.9" y="483.3" width="79.5" height="31.099999999999998" rx="3.5999999999999996" ry="4.6" stroke="#b9b9b9"/>
<path d="M650.6 484.9Q646.1 498.84999999999997 650.6 512.8M660.1 487.9Q657.1 498.84999999999997 660.1 509.79999999999995M650.6 484.9L660.1 487.9M650.6 512.8L660.1 509.79999999999995"/>
<path d="M653.1 486.4Q649.1 498.84999999999997 653.1 511.29999999999995" stroke="#b9b9b9"/>
<path d="M660.1 487.9H697.3M660.1 509.79999999999995H697.3"/>
<path d="M697.3 487.9Q699.3 498.84999999999997 697.3 509.79999999999995M708.5 486.4Q711.5 498.84999999999997 708.5 511.29999999999995M697.3 487.9L708.5 486.4M697.3 509.79999999999995L708.5 511.29999999999995"/>
<path d="M662.1 483H693.3M662.1 514.7H693.3" stroke="#333" stroke-width="1.3"/>
<rect x="630.3" y="481.7" width="82.7" height="34.3" rx="4.6" ry="6.1" stroke="#2a2a2a" stroke-width="1" stroke-dasharray="2.5 4 1 3 4 5"/>
<path d="M650.6 484.9Q646.1 498.84999999999997 650.6 512.8" stroke="#333" stroke-width="1.1" stroke-dasharray="3 2"/>
<path d="M651.6 481.7l-1.2 -1.8M651.6 516l-1.2 1.8" stroke="#b9b9b9"/>
</g>
<path d="M576.5 438V455M578.5 447L577 452" stroke="#444" stroke-width="1" fill="none" />
<path d="M573.5 500.3H590" stroke="#777" stroke-width="1" fill="none" />
<path d="M670.5 446.5H686M683 440V450" stroke="#555" stroke-width="1" fill="none" />
<path d="M654.5 508V494M661 507V496M665.5 505H660M701 506V494.5" stroke="#333" stroke-width="1.2" fill="none" stroke-dasharray="3 1.5"/>
<rect x="666.5" y="570.3" width="122.5" height="72.2" stroke="#161616" stroke-width="1.2" fill="none" />
<rect x="666.5" y="646.3" width="122.5" height="39" stroke="#161616" stroke-width="1.2" fill="none" />
<rect x="792.9" y="570.3" width="243.7" height="12.2" stroke="#161616" stroke-width="1.2" fill="none" />
<path d="M834.3 570.3L834.3 582.5" stroke="#161616" stroke-width="1.1" />
<path d="M995.3 570.3L995.3 582.5" stroke="#161616" stroke-width="1.1" />
<rect x="792.9" y="586.3" width="243.7" height="17.2" stroke="#161616" stroke-width="1.2" fill="none" />
<rect x="792.9" y="606.3" width="243.7" height="21.2" stroke="#161616" stroke-width="1.2" fill="none" />
<rect x="792.9" y="632.2" width="243.7" height="10.3" stroke="#161616" stroke-width="1.2" fill="none" />
<rect x="792.9" y="646.3" width="199.1" height="25.3" stroke="#161616" stroke-width="1.2" fill="none" />
<rect x="792.9" y="675.4" width="199.1" height="9.9" stroke="#161616" stroke-width="1.2" fill="none" />
<path d="M843.2 675.4L843.2 685.3" stroke="#161616" stroke-width="1.1" />
<path d="M895.7 675.4L895.7 685.3" stroke="#161616" stroke-width="1.1" />
<path d="M946.3 675.4L946.3 685.3" stroke="#161616" stroke-width="1.1" />
<rect x="995.3" y="646.3" width="41.3" height="39" stroke="#161616" stroke-width="1.2" fill="none" />
<circle cx="741" cy="575.6" r="3.5" fill="#9b9b9b"/>
<path d="M737.4 581.5Q741 579 744.6 577.5V604H737.4Z" stroke="none" stroke-width="0" fill="#9b9b9b" />
<path d="M746.2 577Q750 574.5 754.6 574.5V604H746.2Z" stroke="none" stroke-width="0" fill="#9b9b9b" />
<path d="M756.2 574.5H765.4V601.5Q761 604 756.2 604Z" stroke="none" stroke-width="0" fill="#9b9b9b" />
<text x="684.4" y="621.4" font-size="19.5" fill="#111" stroke="none" textLength="87.6" lengthAdjust="spacingAndGlyphs" font-family="Liberation Serif, serif" font-weight="bold">Ideia Matriz</text>
<text x="686" y="629.8" font-size="6.4" fill="#000" stroke="none" textLength="85" lengthAdjust="spacingAndGlyphs" font-weight="bold">Arquitectura e Urbanismo</text>
<text x="670.3" y="635.8" font-size="3.4" fill="#222" stroke="none" textLength="115.4" lengthAdjust="spacingAndGlyphs" font-weight="bold">Rua da Torre, 848. "TORRE PLAZA" 1100-PC - 2750-768 Cascais</text>
<text x="670.3" y="640.4" font-size="3.4" fill="#222" stroke="none" textLength="115.4" lengthAdjust="spacingAndGlyphs" font-weight="bold">Telf: 214833119 Telm: 917838172 - 934892798 Fax: 214833119</text>
<text x="670.3" y="652" font-size="3.2" fill="#333" stroke="none" textLength="23" lengthAdjust="spacingAndGlyphs" font-weight="bold">ARQUITECTOS</text>
<text x="670.3" y="659.8" font-size="6.4" fill="#3a3a3a" stroke="none" textLength="52.6" lengthAdjust="spacingAndGlyphs" ><tspan fill="#161616">L</tspan><tspan fill="#8a8a8a">U</tspan><tspan fill="#161616">I</tspan><tspan fill="#8a8a8a">S  </tspan><tspan fill="#161616">TEI</tspan><tspan fill="#8a8a8a">X</tspan><tspan fill="#161616">EI</tspan><tspan fill="#8a8a8a">RA</tspan></text>
<text x="670.3" y="681.4" font-size="5.2" fill="#bdbdbd" stroke="none" textLength="57" lengthAdjust="spacingAndGlyphs" >Nº Insc. Ordem Arqts.</text>
<text x="750" y="681.4" font-size="5.6" fill="#c8c8c8" stroke="none" textLength="36" lengthAdjust="spacingAndGlyphs" >1975 - S</text>
<text x="797" y="575.8" font-size="2.8" fill="#222" stroke="none" textLength="16" lengthAdjust="spacingAndGlyphs" font-weight="bold">DESENHOU</text>
<text x="838" y="575.8" font-size="2.8" fill="#888" stroke="none" textLength="16" lengthAdjust="spacingAndGlyphs" >CONFERIU</text>
<text x="1001" y="575.4" font-size="2.6" fill="#333" stroke="none" textLength="6" lengthAdjust="spacingAndGlyphs" >DATA</text>
<text x="797" y="591.6" font-size="3" fill="#111" stroke="none" textLength="22.5" lengthAdjust="spacingAndGlyphs" font-weight="bold">REQUERENTE</text>
<text x="797" y="612.5" font-size="3" fill="#777" stroke="none" textLength="17.5" lengthAdjust="spacingAndGlyphs" >PROJECTO</text>
<text x="797" y="637.8" font-size="3" fill="#222" stroke="none" textLength="8" lengthAdjust="spacingAndGlyphs" font-weight="bold">FASE</text>
<text x="797" y="652" font-size="3" fill="#444" stroke="none" textLength="8.5" lengthAdjust="spacingAndGlyphs" >PEÇA</text>
<text x="796" y="682" font-size="3.6" fill="#333" stroke="none" textLength="21.5" lengthAdjust="spacingAndGlyphs" >Trabalho nº</text>
<text x="847" y="682" font-size="3" fill="#888" stroke="none" textLength="8" lengthAdjust="spacingAndGlyphs" >DATA</text>
<text x="874" y="682.4" font-size="4.6" fill="#333" stroke="none" textLength="17" lengthAdjust="spacingAndGlyphs" >FEV/20</text>
<text x="898" y="682" font-size="3" fill="#222" stroke="none" textLength="11" lengthAdjust="spacingAndGlyphs" font-weight="bold">ESCALA</text>
<text x="919" y="682.4" font-size="4.2" fill="#aaa" stroke="none" textLength="12" lengthAdjust="spacingAndGlyphs" >1/100</text>
<text x="950" y="682" font-size="3" fill="#666" stroke="none" textLength="19" lengthAdjust="spacingAndGlyphs" >ALTERAÇÃO</text>
<text x="875" y="596" font-size="9.8" fill="#4e4e4e" stroke="none" textLength="79.5" lengthAdjust="spacingAndGlyphs" ><tspan fill="#6e6e6e">J. </tspan><tspan fill="#3a3a3a">DI</tspan><tspan fill="#6e6e6e">AS &amp; </tspan><tspan fill="#3a3a3a">DI</tspan><tspan fill="#6e6e6e">AS, S.A.</tspan></text>
<text x="847.9" y="602.2" font-size="5.4" fill="#2e2e2e" stroke="none" textLength="134.1" lengthAdjust="spacingAndGlyphs" ><tspan fill="#555">AV. </tspan><tspan fill="#111">D</tspan><tspan fill="#555">R. </tspan><tspan fill="#111">F</tspan><tspan fill="#555">RANC</tspan><tspan fill="#111">I</tspan><tspan fill="#555">SCO SA CARN</tspan><tspan fill="#111">EI</tspan><tspan fill="#555">RO, Nº5, 5º</tspan><tspan fill="#111">D</tspan><tspan fill="#555">. O</tspan><tspan fill="#111">DI</tspan><tspan fill="#555">V</tspan><tspan fill="#111">EL</tspan><tspan fill="#555">AS</tspan></text>
<path d="M848 602.9L982 602.9" stroke="#444" stroke-width="0.6" />
<text x="851.6" y="616.8" font-size="9.9" fill="#333" stroke="none" textLength="126.3" lengthAdjust="spacingAndGlyphs" ><tspan fill="#5a5a5a">AV</tspan><tspan fill="#161616">E</tspan><tspan fill="#5a5a5a">N</tspan><tspan fill="#161616">ID</tspan><tspan fill="#5a5a5a">A </tspan><tspan fill="#161616">ELI</tspan><tspan fill="#5a5a5a">AS GARC</tspan><tspan fill="#161616">I</tspan><tspan fill="#5a5a5a">A  </tspan><tspan fill="#161616">–  L</tspan><tspan fill="#5a5a5a">O</tspan><tspan fill="#161616">TE </tspan><tspan fill="#5a5a5a">9</tspan></text>
<text x="900.4" y="624.6" font-size="6.4" fill="#555" stroke="none" textLength="28.6" lengthAdjust="spacingAndGlyphs" ><tspan fill="#707070">AMA</tspan><tspan fill="#333">D</tspan><tspan fill="#707070">ORA</tspan></text>
<text x="892.9" y="640.6" font-size="7.2" fill="#333" stroke="none" textLength="44.1" lengthAdjust="spacingAndGlyphs" ><tspan fill="#5a5a5a">ARQU</tspan><tspan fill="#111">ITE</tspan><tspan fill="#5a5a5a">C</tspan><tspan fill="#111">T</tspan><tspan fill="#5a5a5a">URA</tspan></text>
<text x="853" y="662.8" font-size="10.4" fill="#4a4a4a" stroke="none" textLength="78" lengthAdjust="spacingAndGlyphs" ><tspan fill="#707070">P</tspan><tspan fill="#2a2a2a">L</tspan><tspan fill="#707070">AN</tspan><tspan fill="#2a2a2a">T</tspan><tspan fill="#707070">A  </tspan><tspan fill="#2a2a2a">D</tspan><tspan fill="#707070">O  P</tspan><tspan fill="#2a2a2a">I</tspan><tspan fill="#707070">SO  </tspan><tspan fill="#2a2a2a">–1</tspan></text>
<text x="1011.5" y="673.5" font-size="20" fill="#8c8c8c" stroke="none" font-family="Liberation Sans, sans-serif">4</text>
<text x="321" y="655.8" font-size="6.4" fill="#9c9c9c" stroke="none" textLength="14.6" lengthAdjust="spacingAndGlyphs" ><tspan fill="#b4b4b4">NO</tspan><tspan fill="#333">T</tspan><tspan fill="#b4b4b4">A:</tspan></text>
<text x="314" y="667.2" font-size="7" fill="#4a4a4a" stroke="none" textLength="293.8" lengthAdjust="spacingAndGlyphs" font-weight="bold"><tspan fill="#1a1a1a">– E</tspan><tspan fill="#bdbdbd">S</tspan><tspan fill="#1a1a1a">TE EDIFI</tspan><tspan fill="#bdbdbd">C</tspan><tspan fill="#1a1a1a">I</tspan><tspan fill="#bdbdbd">O </tspan><tspan fill="#1a1a1a">DE</tspan><tspan fill="#bdbdbd">S</tspan><tspan fill="#1a1a1a">TI</tspan><tspan fill="#bdbdbd">NA</tspan><tspan fill="#1a1a1a">–</tspan><tspan fill="#bdbdbd">S</tspan><tspan fill="#1a1a1a">E </tspan><tspan fill="#bdbdbd">A S</tspan><tspan fill="#1a1a1a">E</tspan><tspan fill="#bdbdbd">R CONS</tspan><tspan fill="#1a1a1a">TIT</tspan><tspan fill="#bdbdbd">U</tspan><tspan fill="#1a1a1a">ID</tspan><tspan fill="#bdbdbd">O </tspan><tspan fill="#1a1a1a">E </tspan><tspan fill="#bdbdbd">V</tspan><tspan fill="#1a1a1a">E</tspan><tspan fill="#bdbdbd">N</tspan><tspan fill="#1a1a1a">DID</tspan><tspan fill="#bdbdbd">O </tspan><tspan fill="#1a1a1a">E</tspan><tspan fill="#bdbdbd">M R</tspan><tspan fill="#1a1a1a">E</tspan><tspan fill="#bdbdbd">G</tspan><tspan fill="#1a1a1a">I</tspan><tspan fill="#bdbdbd">M</tspan><tspan fill="#1a1a1a">E DE </tspan><tspan fill="#bdbdbd">PROPR</tspan><tspan fill="#1a1a1a">IED</tspan><tspan fill="#bdbdbd">A</tspan><tspan fill="#1a1a1a">DE H</tspan><tspan fill="#bdbdbd">OR</tspan><tspan fill="#1a1a1a">I</tspan><tspan fill="#bdbdbd">ZON</tspan><tspan fill="#1a1a1a">T</tspan><tspan fill="#bdbdbd">A</tspan><tspan fill="#1a1a1a">L</tspan></text>
<circle cx="636.9" cy="664" r="11.7" fill="none" stroke="#3a3a3a" stroke-width="0.8"/>
<path d="M636.9 664L641.9 652" stroke="#161616" stroke-width="1.8" />
<text x="642.6" y="652.4" font-size="6" fill="#555" stroke="none" font-style="italic">N</text>
</g></svg><!--/DRAWING-->
<div id="scroll"></div><div id="thumb"></div>
<div id="rpane"></div>

<div style="position:absolute;left:1243px;top:426.5px;width:29px;height:29.5px;background:#1d1d1d;border:1px solid #5e5e5e;border-radius:3.5px"></div>
<div class="t" id="pg4" style="left:1243px;width:29px;text-align:center;top:433.5px;font-size:13px;color:#e0e0e0">4</div>
<div class="t" id="pg16" style="left:1243px;width:30px;text-align:center;top:466px;font-size:13.5px;color:#e0e0e0">16</div>
<svg style="left:1210px;top:76px" width="70" height="616" viewBox="1210 76 70 616" fill="none" stroke="#dadada" stroke-width="1.6" stroke-linecap="round" stroke-linejoin="round">
 <path d="M1223.6 88L1227 84.6L1230.4 88" stroke="#9a9a9a" stroke-width="1.7"/>
 <path d="M1223.6 681.8L1227 685.2L1230.4 681.8" stroke="#8a8a8a" stroke-width="1.7"/>
 <!-- AI doc icon -->
 <g stroke="#c9c8ff" stroke-width="1.5">
  <path d="M1259.4 94.6H1251.6C1250.6 94.6 1250 95.2 1250 96.2V106.6C1250 107.6 1250.6 108.2 1251.6 108.2H1262.8C1263.8 108.2 1264.4 107.6 1264.4 106.6V100.4"/>
  <path d="M1252.8 98.6H1256.4M1252.8 101.6H1259M1252.8 104.6H1255" stroke-width="1.3"/>
  <path d="M1263.8 92.2L1264.7 94.8L1267.3 95.7L1264.7 96.6L1263.8 99.2L1262.9 96.6L1260.3 95.7L1262.9 94.8Z" fill="#c9c8ff" stroke-width="0.7"/>
 </g>
 <path d="M1248 122.3H1268M1242.5 556.6H1272" stroke="#565656" stroke-width="1"/>
 <!-- comments -->
 <path d="M1259.2 135C1262.8 135 1265.2 137.8 1265.2 141V147H1259.2C1255.6 147 1253.2 144.200 1253.2 141C1253.2 137.8 1255.6 135 1259.2 135Z" stroke-width="1.5"/>
 <path d="M1256.8 139.8H1261.800M1256.8 142.4H1260.4" stroke-width="1.2"/>
 <path d="M1252.6 137.800C1248.8 140.6 1249.600 147.4 1255 149.6H1262.4" stroke-width="1.5"/>
 <!-- bookmark -->
 <path d="M1250.4 171.2H1259.4V186L1254.9 182.2L1250.4 186Z" stroke-width="1.6"/>
 <path d="M1262.2 173.600H1266.4M1262.2 176.8H1266.4M1262.2 180H1266.4" stroke-width="1.3"/>
 <!-- copy pages -->
 <path d="M1253.200 219.6H1252.4C1251.4 219.6 1250.8 219 1250.8 218V209.4C1250.8 208.4 1251.4 207.800 1252.4 207.800H1258.4" stroke-width="1.5"/>
 <path d="M1254.4 212.4C1254.4 211.4 1255 210.8 1256 210.8H1260.8L1264.6 214.600V221.600C1264.6 222.600 1264 223.200 1263 223.200H1256C1255 223.200 1254.400 222.600 1254.4 221.600ZM1260.6 211V214.800H1264.400" stroke-width="1.5"/>
 <!-- page nav chevrons -->
 <path d="M1253.8 510.6L1258.3 506.2L1262.8 510.6" stroke-width="2"/>
 <path d="M1253.8 537.6L1258.3 542L1262.8 537.6" stroke-width="2"/>
 <!-- rotate -->
 <path d="M1264.400 577.8C1263.4 581 1259.6 582.6 1256.2 581.2C1252.8 579.8 1251.400 575.8 1253 572.8C1254.600 569.8 1258.8 568.600 1262 570.8L1264.600 573.4" stroke-width="1.6"/>
 <path d="M1264.800 569V573.6H1260.200" stroke-width="1.6"/>
 <!-- fit page -->
 <path d="M1253 603C1253 602 1253.600 601.4 1254.600 601.4H1260.200L1264.600 605.800V613.800C1264.600 614.800 1264 615.400 1263 615.400H1254.600C1253.600 615.400 1253 614.800 1253 613.800ZM1260 601.600V606H1264.400" stroke-width="1.5"/>
 <path d="M1255.600 612.6L1258 610.2M1255.600 610.400V612.600H1257.800M1262 606.8L1259.800 609M1262 609V606.800" stroke-width="1.1" stroke="#c8c8c8"/>
 <path d="M1269.200 614.6V619H1265Z" fill="#d0d0d0" stroke="none"/>
 <!-- zoom in -->
 <circle cx="1257" cy="641" r="5.300"/><path d="M1261 645L1265.400 649.600M1254.400 641H1259.600M1257 638.400V643.600" />
 <!-- zoom out -->
 <circle cx="1257" cy="674.8" r="5.300"/><path d="M1261 678.800L1265.400 683.400M1254.400 674.800H1259.600" />
</svg>

<div id="lpal"></div>

<svg style="left:0;top:290px" width="70" height="290" viewBox="0 290 70 290" fill="none" stroke="#d6d6d6" stroke-width="1.5" stroke-linecap="round" stroke-linejoin="round">
 <rect x="15" y="303.2" width="30" height="3.2" rx="1.2" fill="#6c6c6c" stroke="none"/>
 <rect x="15" y="314" width="30" height="30" rx="3" fill="#1b73e8" stroke="none"/>
 <!-- cursor -->
 <path d="M26.2 321.6V334.4L29.3 331.5L31.6 336.2L33.4 335.3L31.2 330.7L35.2 330.4Z" fill="#fff" stroke="#fff" stroke-width="0.6"/>
 <path d="M40.6 335.6V340.2H36.2Z" fill="#e9f1ff" stroke="none"/>
 <!-- comment -->
 <path d="M29.8 358.6C34 358.6 37.2 361.8 37.2 366V373.4H29.8C25.6 373.4 22.4 370.2 22.4 366C22.4 361.8 25.6 358.6 29.8 358.6Z" stroke-width="1.6" transform="rotate(0)"/>
 <path d="M26.4 364H33.4M26.4 367.4H31.4" stroke-width="1.4"/>
 <path d="M40.8 372.8V377.4H36.4Z" fill="#dcdcdc" stroke="none"/>
 <!-- highlighter -->
 <path d="M26.6 405.6L34.2 397.6C35.4 396.4 38.2 398.8 37 400.2L29.4 408.2L26 408.8Z" stroke-width="1.5"/>
 <path d="M22.4 410L24.6 407.4L27 409.8L26.4 410.2Z" fill="#d6d6d6" stroke-width="0.8"/>
 <path d="M28.6 409.4H38.6L36.8 411.4H27.6Z" fill="#8a8a8a" stroke="none"/>
 <path d="M40.8 410.6V415.2H36.4Z" fill="#dcdcdc" stroke="none"/>
 <!-- lasso -->
 <path d="M33.6 446C27.4 447.6 21.6 445 22.4 441.2C23.2 437.4 31.2 436.2 34.8 438.2C38 440 36 443.4 32 443.2C29.4 443 29.2 441 30.6 440.2" stroke-width="1.5"/>
 <path d="M40.8 447.6V452.2H36.4Z" fill="#dcdcdc" stroke="none"/>
 <!-- text box -->
 <path d="M21.8 471.4H38M21.8 486.6H38" stroke-width="1.4" stroke-dasharray="1.6 1.3" stroke-linecap="butt"/>
 <path d="M21.8 471.4V486.6M38 471.4V486.6" stroke-width="1.4" stroke-dasharray="1.6 1.3" stroke-linecap="butt"/>
 <path d="M26.4 484L29.9 474.4L33.4 484M27.7 480.8H32.1" stroke-width="1.4"/>
 <path d="M41 485V489.6H36.6Z" fill="#dcdcdc" stroke="none"/>
 <!-- sign pen -->
 <path d="M22 523L23.2 516.6L30.4 510.4L36 515.6L30 522.4ZM22.4 522.6L27.6 517.4M29 512L34.6 517.2M31.8 509.6L36.8 514.2" stroke-width="1.4"/>
 <circle cx="28.2" cy="516.8" r="1" stroke-width="1"/>
 <path d="M31 523.4C32.4 520.6 33.4 523.6 34.4 522.2C35.2 521 36 522.6 37.2 521.8" stroke-width="1.1"/>
 <path d="M40.8 522.6V527.2H36.4Z" fill="#dcdcdc" stroke="none"/>
 <!-- dots -->
 <circle cx="24.2" cy="553.8" r="1" fill="#d0d0d0" stroke="none"/><circle cx="29.6" cy="553.8" r="1" fill="#d0d0d0" stroke="none"/><circle cx="35" cy="553.8" r="1" fill="#d0d0d0" stroke="none"/>
</svg>

<div id="taskbar"></div><div id="search"></div>

<div style="position:absolute;left:798px;top:692px;width:34px;height:28px;background:#55626f"></div>
<div class="t" id="tsearch" style="left:71.8px;top:698.4px;font-size:14.5px;color:#dadada;transform:scaleX(0.865);transform-origin:0 0">Pesquisa</div>
<div class="t" id="tclock" style="left:1244.8px;top:699.5px;font-size:12px;color:#f0f0f0;transform:scaleX(0.83);transform-origin:0 0">15:15</div>
<svg style="left:0;top:692px" width="1280" height="28" viewBox="0 692 1280 28" fill="none" stroke-linecap="round" stroke-linejoin="round">
 <!-- windows logo -->
 <path d="M9 700L15.200 699.1V705H9ZM16.200 698.950L24 697.8V705H16.200ZM9 706H15.200V711.900L9 711ZM16.200 706H24V713.2L16.200 712.050Z" fill="#f2f2f2"/>
 <!-- search icon -->
 <circle cx="54.8" cy="702.8" r="4.300" stroke="#e4e4e4" stroke-width="1.3"/><path d="M51.600 706.200L45.800 712" stroke="#e4e4e4" stroke-width="1.4"/>
 <!-- underlines -->
 <g fill="#86bbe9">
  <rect x="282" y="718" width="26" height="2"/><rect x="351.400" y="718" width="26" height="2"/><rect x="420.600" y="718" width="26" height="2"/><rect x="455" y="718" width="26" height="2"/>
  <rect x="559" y="718" width="26" height="2"/><rect x="663.400" y="718" width="26" height="2"/><rect x="732.800" y="718" width="26" height="2"/><rect x="767.200" y="718" width="26" height="2"/>
  <rect x="798" y="718" width="34" height="2"/>
 </g>
 <!-- explorer -->
 <path d="M287.200 700.400V699.600C287.200 699 287.600 698.600 288.200 698.600H292.600L294.200 700.400H302.200C302.800 700.400 303.200 700.800 303.200 701.400V710.600H287.200Z" fill="#f0c64a"/>
 <path d="M287.200 702.200H303.200V711.400H287.200Z" fill="#f7dc7c"/>
 <path d="M290 705.800H300.400V711.400H290Z" fill="#5d9ed0"/><path d="M292.600 708.600H297.800V711.400H292.600Z" fill="#d8e8f4"/>
 <!-- chrome x3 -->
 <g>
  <circle cx="329.600" cy="705.200" r="7.900" fill="#e34133"/>
  <path d="M329.600 705.200L322.750 701.250A7.900 7.900 0 0 0 329.600 713.100L333.500 706.600Z" fill="#2da04f"/>
  <path d="M329.600 705.200L337 702.200A7.900 7.900 0 0 1 329.600 713.100Z" fill="#f8c21a"/>
  <circle cx="329.600" cy="705.200" r="3.700" fill="#f0f0f0"/><circle cx="329.600" cy="705.200" r="2.900" fill="#3f7fe6"/>
 </g>
 <g transform="translate(34.9 0)">
  <circle cx="329.600" cy="705.200" r="7.900" fill="#e34133"/>
  <path d="M329.600 705.200L322.750 701.250A7.900 7.900 0 0 0 329.600 713.100L333.500 706.600Z" fill="#2da04f"/>
  <path d="M329.600 705.200L337 702.200A7.900 7.900 0 0 1 329.600 713.100Z" fill="#f8c21a"/>
  <circle cx="329.600" cy="705.200" r="3.700" fill="#f0f0f0"/><circle cx="329.600" cy="705.200" r="2.900" fill="#3f7fe6"/>
 </g><g transform="translate(69.4 0)">
  <circle cx="329.600" cy="705.200" r="7.900" fill="#e34133"/>
  <path d="M329.600 705.200L322.750 701.250A7.900 7.900 0 0 0 329.600 713.100L333.500 706.600Z" fill="#2da04f"/>
  <path d="M329.600 705.200L337 702.200A7.900 7.900 0 0 1 329.600 713.100Z" fill="#f8c21a"/>
  <circle cx="329.600" cy="705.200" r="3.700" fill="#f0f0f0"/><circle cx="329.600" cy="705.200" r="2.900" fill="#3f7fe6"/>
 </g>
 <circle cx="334.800" cy="710.600" r="3" fill="#3a2a22"/><circle cx="334.800" cy="709.800" r="1.100" fill="#e0a070"/>
 <circle cx="369.600" cy="710.600" r="3" fill="#5a5048"/><circle cx="369.600" cy="709.800" r="1.100" fill="#e8e0d8"/>
 <circle cx="404.200" cy="710.600" r="3" fill="#1f2328"/><path d="M402.600 710.400H405.800" stroke="#c8d4e0" stroke-width="1"/>
 <!-- outlook -->
 <rect x="430" y="697.800" width="10.600" height="14.400" rx="1" fill="#2a8bd8"/><rect x="435.200" y="701.600" width="5.400" height="7" fill="#5cb4f0"/>
 <rect x="425.800" y="700.600" width="9.400" height="9.400" rx="1" fill="#0f6cbd"/><circle cx="430.500" cy="705.300" r="2.500" stroke="#fff" stroke-width="1.400"/>
 <!-- word -->
 <rect x="465" y="697.800" width="11" height="14.400" rx="1" fill="#2b7cd3"/><rect x="465" y="705" width="11" height="7.200" fill="#185abd"/>
 <rect x="460.800" y="700.600" width="9.400" height="9.400" rx="1" fill="#124ea8"/><path d="M462.600 703.200L463.900 707.600L465.500 703.800L467.100 707.600L468.400 703.200" stroke="#fff" stroke-width="1.100"/>
 <!-- scanner -->
 <rect x="495.800" y="698" width="14.800" height="14.600" rx="1.500" fill="#3a42b8"/>
 <path d="M499 709.600L501 701.800H505.400L507.400 709.600Z" stroke="#e6e8ff" stroke-width="1.300"/><path d="M498.200 709.800H508.200" stroke="#e6e8ff" stroke-width="1.800"/>
 <!-- CS -->
 <text x="531" y="709" font-family="Liberation Sans, sans-serif" font-weight="bold" font-size="10.500" fill="#f4f4f4" letter-spacing="-0.300">CS</text>
 <path d="M531.400 711.600H544.400" stroke="#22c8a8" stroke-width="1.600"/>
 <!-- calculator -->
 <rect x="567" y="697.800" width="11" height="14.800" rx="1" fill="#74858c"/><rect x="568.600" y="699.400" width="7.800" height="2.800" fill="#8fd0d8"/>
 <g fill="#dfe6e8"><rect x="568.600" y="703.600" width="2" height="2"/><rect x="571.500" y="703.600" width="2" height="2"/><rect x="574.400" y="703.600" width="2" height="2"/><rect x="568.600" y="706.400" width="2" height="2"/><rect x="571.500" y="706.400" width="2" height="2"/><rect x="574.400" y="706.400" width="2" height="2"/><rect x="568.600" y="709.200" width="2" height="2"/><rect x="571.500" y="709.200" width="2" height="2"/><rect x="574.400" y="709.200" width="2" height="2"/></g>
 <!-- clapper -->
 <path d="M599.400 702.600L613.800 698.600L614.800 701.800L600.200 705.600Z" fill="#a048d8"/>
 <rect x="599.600" y="704.400" width="15.400" height="8.200" rx="1" fill="#c060e8"/><rect x="599.600" y="708.400" width="15.400" height="4.200" rx="1" fill="#8a3cd0"/>
 <!-- diamond -->
 <path d="M641.400 697.600L649.400 705.500L641.400 713.400L633.400 705.500Z" fill="#5560e0"/><path d="M641.400 697.600L649.400 705.500L641.400 713.400Z" fill="#6b56d8"/>
 <path d="M639.600 702.600L644.200 705.500L639.600 708.400Z" fill="#fff"/>
 <!-- whatsapp -->
 <circle cx="676.600" cy="705.200" r="6.900" stroke="#2bd46a" stroke-width="1.700"/><path d="M670.200 712.600L671.400 708.800" stroke="#2bd46a" stroke-width="1.800"/>
 <path d="M673.800 702.600C673.600 705.400 676.400 708.200 679.400 708.200L680 706.800L678.400 705.800L677.600 706.600C676.600 706.200 675.800 705.400 675.400 704.400L676.200 703.600L675.200 702Z" fill="#2bd46a"/>
 <!-- teams -->
 <circle cx="714.800" cy="700.600" r="2.300" fill="#7b83eb"/><circle cx="709.600" cy="699.800" r="2.800" fill="#5059c9"/>
 <rect x="711.600" y="703" width="7" height="7.600" rx="2" fill="#7b83eb"/><rect x="705.400" y="702.600" width="10" height="10.400" rx="2.500" fill="#5059c9"/>
 <rect x="703" y="701.800" width="8.600" height="8.600" rx="1" fill="#4049b0"/><path d="M705 704H709.600M707.300 704V708.600" stroke="#fff" stroke-width="1.200"/>
 <!-- spotify -->
 <circle cx="745.600" cy="705.400" r="7.900" fill="#1ed760"/>
 <path d="M741 702.800C744.200 701.800 747.800 702.200 750.400 703.600M741.600 705.600C744.200 704.800 747.200 705.200 749.600 706.400M742.200 708.200C744.200 707.600 746.600 707.800 748.600 709" stroke="#14301e" stroke-width="1.300"/>
 <!-- photos -->
 <rect x="773.600" y="698.200" width="13.800" height="14.200" rx="1.500" fill="#2f7fe0"/><path d="M773.600 710.800L779.400 703.800L784 709.200L785.600 707.600L787.400 709.600V710.900C787.400 711.700 786.700 712.400 785.900 712.400H775.100C774.300 712.400 773.600 711.700 773.600 710.900Z" fill="#7fd0f4"/><circle cx="784.200" cy="701.600" r="1.300" fill="#eaf6ff"/>
 <!-- acrobat -->
 <rect x="807.800" y="697.500" width="15" height="15.200" rx="2.600" fill="#c4100a"/>
 <path d="M810.600 709.400C811.800 708.600 813.600 705.800 814.600 703.200C815.400 701.200 815.400 699.800 814.600 699.800C813.800 699.800 813.800 701.400 814.600 703.200C815.800 705.800 818 707.600 819.600 707.600C820.600 707.600 820.600 706.400 819.400 706.400C817 706.400 812.800 707.400 810.600 709.400ZM810.600 709.400C809.800 710 809.800 709.200 810.600 709.400" stroke="#ffd8d0" stroke-width="1.100"/>
 <!-- tray -->
 <path d="M1154.600 708.600L1160 703.400L1165.400 708.600" stroke="#f0f0f0" stroke-width="1.200"/>
 <path d="M1180.800 702.800H1189.200V709.800H1179.600M1189.400 704.800H1190.400V707.800H1189.400" stroke="#f0f0f0" stroke-width="1.100"/>
 <path d="M1176 701V703M1178.400 701V703M1175.400 703.200H1179V705.400C1179 706.800 1175.400 706.800 1175.400 705.400ZM1177.200 706.600V710" stroke="#f0f0f0" stroke-width="1.100"/>
 <path d="M1204.600 698.600C1206.400 699.800 1208.600 700.400 1210.800 700.400C1210.800 706 1209 710.200 1204.600 712.400C1200.200 710.200 1198.400 706 1198.400 700.400C1200.600 700.400 1202.800 699.800 1204.600 698.600Z" fill="#f4f4f4"/>
 <path d="M1204.600 698.600V712.400M1198.400 705H1210.800" stroke="#1a1a1a" stroke-width="0.900"/>
 <circle cx="1208.600" cy="709.400" r="3.300" fill="#2aa84a"/><path d="M1207 709.400L1208.200 710.600L1210.200 708.400" stroke="#fff" stroke-width="0.900"/>
 <path d="M1223.400 711.600C1223.800 706 1228 701.800 1233.600 701.600M1226 711.800C1226.400 707.600 1229.400 704.600 1233.600 704.400M1228.600 712C1228.800 709.200 1230.800 707.200 1233.600 707" stroke="#e8e8e8" stroke-width="1.200"/>
 <circle cx="1232.600" cy="711" r="1.400" fill="#f4f4f4"/>
 <path d="M1275.500 694V720" stroke="#8a96a4" stroke-width="1"/>
</svg>

</body>
</html>
